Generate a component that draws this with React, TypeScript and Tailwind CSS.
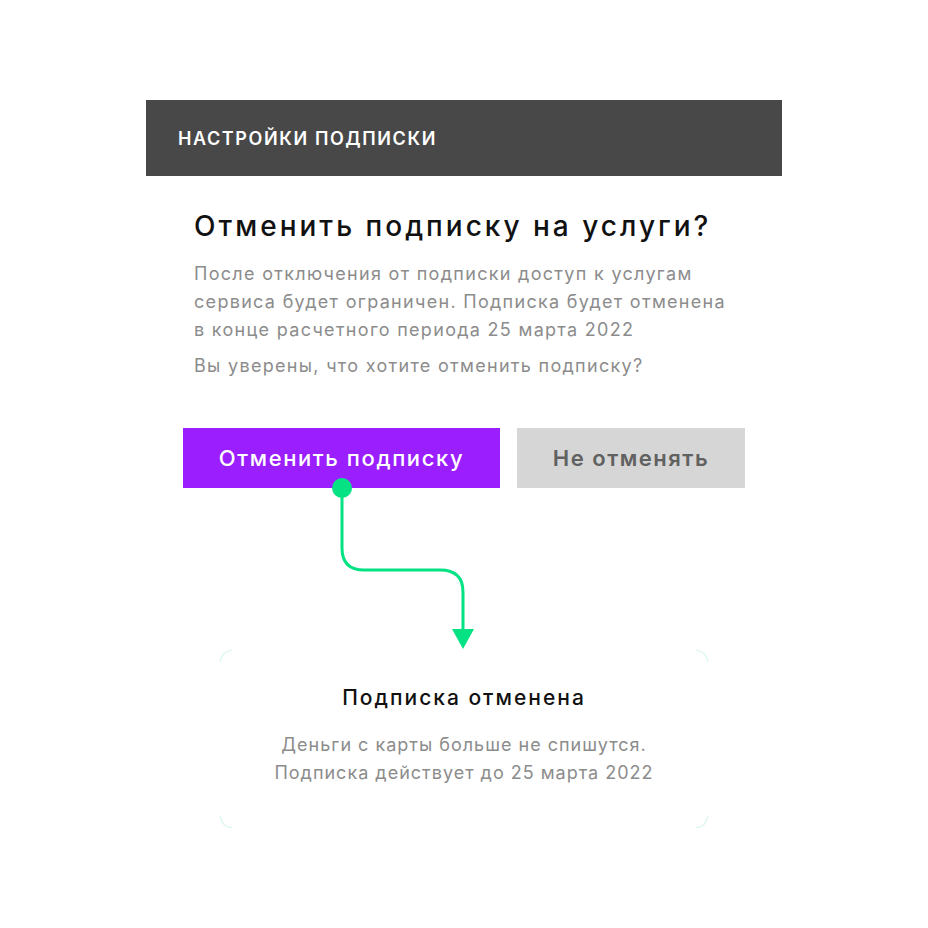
import type { FC } from 'react';

const font = { fontFamily: 'Inter, "Noto Sans", sans-serif' };

// Small rounded corner marks around the confirmation card
const Corner: FC<{ className: string }> = ({ className }) => (
  <div className={`absolute w-3 h-3 border-[#d4f7e6] ${className}`} />
);

const Connector: FC = () => (
  <svg width="160" height="172" viewBox="0 0 160 172" className="block ml-[186px] -mt-[10px]">
    <circle cx="10" cy="10" r="10" fill="#05e283" />
    <path
      d="M10 10 V70 Q10 92 32 92 H108 Q131 92 131 114 V152"
      fill="none"
      stroke="#05e283"
      strokeWidth="3"
    />
    <path d="M120 151 H142 L131 171 Z" fill="#05e283" />
  </svg>
);

const App: FC = () => {
  return (
    <div className="w-[928px] h-[928px] bg-white pt-[100px] pl-[146px]" style={font}>
      <div className="w-[636px]">
        <div className="h-[76px] bg-[#484848] flex items-center pl-8">
          <span className="text-white text-[18px] font-semibold tracking-[1.6px]">НАСТРОЙКИ ПОДПИСКИ</span>
        </div>

        <div className="pl-12 pt-[32px]">
          <h1 className="text-[28px] leading-[36px] font-medium text-[#111] tracking-[3px]">
            Отменить подписку на услуги?
          </h1>
          <p className="mt-[16px] text-[18px] leading-[28px] text-[#8c8c8c] tracking-[1.3px]">
            <span className="block">После отключения от подписки доступ к услугам</span>
            <span className="block">сервиса будет ограничен. Подписка будет отменена</span>
            <span className="block">в конце расчетного периода 25 марта 2022</span>
          </p>
          <p className="mt-[8px] text-[18px] leading-[28px] text-[#8c8c8c] tracking-[1.3px]">
            Вы уверены, что хотите отменить подписку?
          </p>
        </div>

        <div className="flex gap-[17px] mt-[48px] ml-[37px]">
          <button className="w-[317px] h-[60px] bg-[#9b1ffe] text-white text-[22px] font-medium tracking-[1.6px]">
            Отменить подписку
          </button>
          <button className="w-[228px] h-[60px] bg-[#d6d6d6] text-[#616161] text-[22px] font-semibold tracking-[1.5px]">
            Не отменять
          </button>
        </div>

        <Connector />

        <div className="relative ml-[74px] w-[488px] h-[178px] flex flex-col items-center pt-[34px]">
          <Corner className="top-0 left-0 border-t border-l rounded-tl-xl" />
          <Corner className="top-0 right-0 border-t border-r rounded-tr-xl" />
          <Corner className="bottom-0 left-0 border-b border-l rounded-bl-xl" />
          <Corner className="bottom-0 right-0 border-b border-r rounded-br-xl" />
          <h2 className="text-[21px] leading-[28px] font-medium text-[#111] tracking-[2px]">Подписка отменена</h2>
          <p className="mt-[19px] text-[18px] leading-[28px] text-[#8c8c8c] text-center tracking-[1px]">
            <span className="block">Деньги с карты больше не спишутся.</span>
            <span className="block">Подписка действует до 25 марта 2022</span>
          </p>
        </div>
      </div>
    </div>
  );
};

export default App;
